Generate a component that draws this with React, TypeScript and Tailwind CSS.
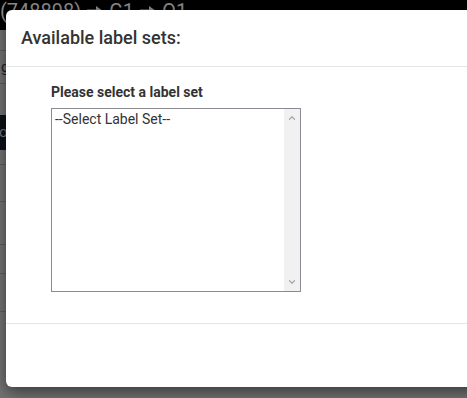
import { FiChevronUp, FiChevronDown } from "react-icons/fi";

function Arrow() {
  return (
    <svg viewBox="0 0 16 12" className="inline-block w-[16px] h-[12px] mx-[6px] align-[1px]" fill="#8c8c8c">
      <path d="M0 4.5h9V1l7 5-7 5V7.5H0z" />
    </svg>
  );
}

export default function App() {
  return (
    <div
      className="relative w-[467px] h-[398px] overflow-hidden bg-[#737373]"
      style={{ fontFamily: "Roboto, 'Liberation Sans', sans-serif" }}
    >
      {/* page behind the backdrop */}
      <div className="flex flex-col">
        <div className="h-[30px] bg-black text-[#8c8c8c] text-[20px] leading-[20px] pt-[1px] whitespace-nowrap">
          (748898)<Arrow />G1<Arrow />Q1
        </div>
        <div className="h-[21px] border-b border-[#5e5e5e]" />
        <div className="h-[33px] border-b border-[#5e5e5e] text-[#222] text-[15px] leading-[33px] pl-[1px]">
          g
        </div>
        <div className="h-[31px]" />
        <div className="h-[35px] bg-[#0d1117] text-[#777] text-[15px] leading-[35px] -ml-[1px]">ou</div>
        <div className="h-[15px] border-b border-[#5e5e5e]" />
        <div className="h-[37px] border-b border-[#5e5e5e]" />
        <div className="h-[43px] border-b border-[#5e5e5e]" />
        <div className="h-[29px] border-b border-[#5e5e5e]" />
        <div className="h-[38px] border-b border-[#5e5e5e]" />
        <div className="h-[75px] flex items-end gap-0 pl-[228px]">
          <div className="h-[11px] w-[12px] border-x border-[#555]" />
          <div className="h-[11px] w-[122px] ml-[108px] border-x border-t border-[#555] rounded-t-[3px]" />
          <div className="h-[11px] w-[20px] ml-[17px] border-l border-t border-[#555] rounded-tl-[3px]" />
        </div>
      </div>

      {/* modal */}
      <div className="absolute left-[6px] top-[10px] w-[480px] h-[377px] bg-white rounded-[6px] shadow-[0_5px_15px_rgba(0,0,0,0.5)] flex flex-col text-[#333]">
        <div className="h-[57px] px-[15px] flex items-center border-b border-[#e5e5e5]">
          <h4 className="text-[18px] font-medium leading-[26px]">Available label sets:</h4>
        </div>

        <div className="h-[256px] pl-[45px] pt-[16px]">
          <label className="block text-[14px] font-bold leading-[18px] mb-[7px]">
            Please select a label set
          </label>
          <div className="w-[250px] h-[184px] border border-[#8a8a90] flex">
            <div className="flex-1 px-[3px] pt-[2px] text-[14px] leading-[16px]">--Select Label Set--</div>
            <div className="w-[16px] bg-[#f1f1f1] flex flex-col items-center justify-between py-[4px] text-[#a8a8a8]">
              <FiChevronUp className="w-[10px] h-[10px]" strokeWidth={3} />
              <FiChevronDown className="w-[10px] h-[10px]" strokeWidth={3} />
            </div>
          </div>
        </div>

        <div className="flex-1 border-t border-[#e5e5e5]" />
      </div>
    </div>
  );
}
